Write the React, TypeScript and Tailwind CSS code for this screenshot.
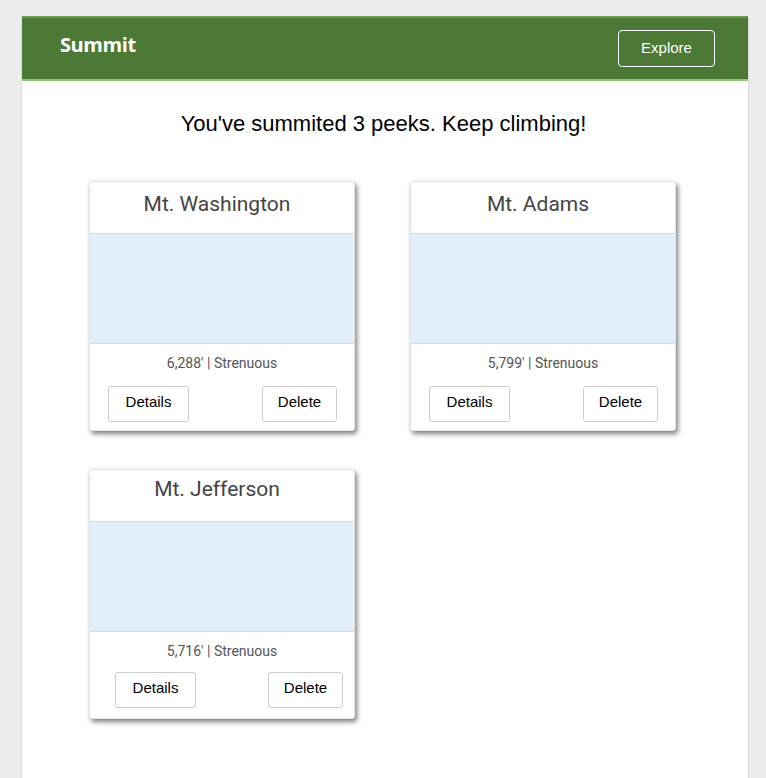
import React from 'react';

interface Peak {
  id: number;
  name: string;
  elevation: string;
  difficulty: string;
  shift?: boolean;
}

const peaks: Peak[] = [
  { id: 1, name: 'Mt. Washington', elevation: "6,288'", difficulty: 'Strenuous' },
  { id: 2, name: 'Mt. Adams', elevation: "5,799'", difficulty: 'Strenuous' },
  { id: 3, name: 'Mt. Jefferson', elevation: "5,716'", difficulty: 'Strenuous', shift: true },
];

const PeakCard: React.FC<{ peak: Peak }> = ({ peak }) => (
  <div className="w-[266px] h-[250px] bg-white rounded-[3px] shadow-[2px_3px_5px_rgba(0,0,0,0.5)] border border-[#e4e4e4] flex flex-col">
    <h3
      className={`h-[51px] flex justify-center pr-[10px] text-[21px] leading-[26px] text-[#444] font-['Roboto',sans-serif] ${
        peak.shift ? 'pt-[6px]' : 'pt-[9px]'
      }`}
    >
      {peak.name}
    </h3>
    <div className="h-[111px] bg-[#e2effa] border-y border-[#d4dbe2]"></div>
    <p className="mt-[10px] text-center text-[14px] leading-[18px] text-[#555] font-['Roboto',sans-serif]">
      {peak.elevation} | {peak.difficulty}
    </p>
    <div
      className={`flex justify-between ${
        peak.shift ? 'mt-[12px] pl-[25px] pr-[11px]' : 'mt-[14px] pl-[18px] pr-[17px]'
      }`}
    >
      <button className="w-[81px] h-[36px] pb-[3px] border border-[#ccc] rounded-[3px] bg-white text-[15px] text-black font-['Liberation_Sans',sans-serif]">
        Details
      </button>
      <button className="w-[75px] h-[36px] pb-[3px] border border-[#ccc] rounded-[3px] bg-white text-[15px] text-black font-['Liberation_Sans',sans-serif]">
        Delete
      </button>
    </div>
  </div>
);

export default function App() {
  return (
    <div className="min-h-[778px] bg-[#ececec] pt-[16px]">
      <div className="mx-[21px] w-[728px] min-h-[762px] bg-white border-x border-[#dcdcdc] flex flex-col">
        {/* Header */}
        <header className="h-[65px] bg-[#4c7a36] border-t-2 border-t-[#6a9a54] border-b-2 border-b-[#90c67c] flex items-center justify-between pl-[38px] pr-[33px]">
          <span className="mb-[7px] text-white text-[20px] font-bold font-['Open_Sans',sans-serif] tracking-[-0.4px]">
            Summit
          </span>
          <button className="w-[97px] h-[37px] border border-white rounded-[4px] text-white text-[15px] font-['Liberation_Sans',sans-serif]">
            Explore
          </button>
        </header>

        <h2 className="mt-[26px] pr-[3px] text-center text-[22px] text-black font-['Liberation_Sans',sans-serif]">
          You've summited 3 peeks. Keep climbing!
        </h2>

        {/* Peaks grid */}
        <div className="mt-[41px] ml-[67px] grid grid-cols-[266px_266px] gap-x-[55px] gap-y-[38px]">
          {peaks.map((peak) => (
            <PeakCard key={peak.id} peak={peak} />
          ))}
        </div>
      </div>
    </div>
  );
}
